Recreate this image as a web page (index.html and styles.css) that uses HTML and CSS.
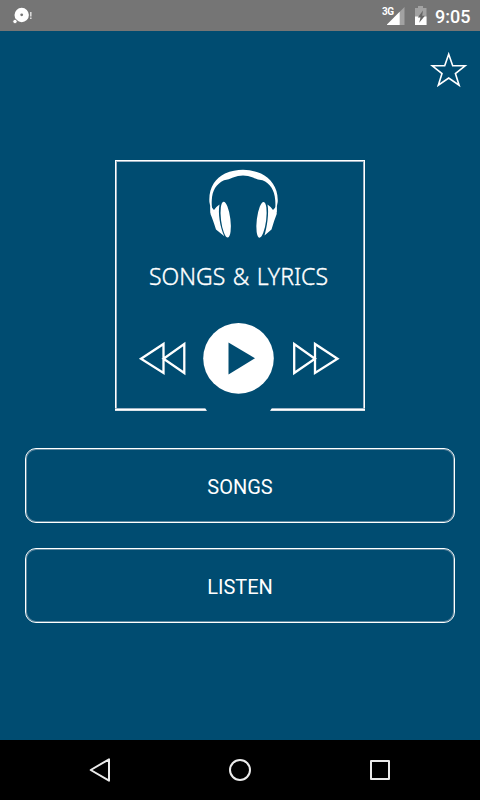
FILE: index.html
```html
<!DOCTYPE html>
<html lang="en">
<head>
<meta charset="utf-8">
<title>Songs &amp; Lyrics</title>
<link rel="stylesheet" href="styles.css">
</head>
<body>
<div class="screen">
  <header class="status">
    <svg class="notice" width="20" height="18" viewBox="12 7 20 18"><circle cx="21.700" cy="15" r="7.200" fill="#fff"/><circle cx="21.700" cy="14.800" r="1.400" fill="#757575"/><circle cx="15" cy="21.500" r="2.100" fill="#fff" stroke="#757575" stroke-width=".7"/><path d="M30.800 12v4.500M30.800 17.500v1.500" stroke="#ddd" stroke-width="1.500"/></svg>
    <span class="network">3G</span>
    <svg class="signal" width="18" height="19" viewBox="387 6 18 19"><path d="M404.500 7v18h-18z" fill="#a2a2a2"/><path d="M399.700 11.800v13.200H386.500z" fill="#fff"/></svg>
    <svg class="battery" width="13" height="19" viewBox="414 6 13 19"><path d="M418 6h5v2h3.500v17H415V8h3z" fill="#a2a2a2"/><path d="M415 16.500h11.500V25H415z" fill="#fff"/><path d="M423 10.500l-5.200 7h2.700l-1.300 5.300 5.700-7h-2.700z" fill="#666"/></svg>
    <span class="clock">9:05</span>
  </header>
  <main class="content">
    <div class="toolbar">
      <svg width="40" height="38" viewBox="429 50 40 38"><path d="M448.700 54.200l4 11.600h12.400l-9.700 7.700 3.700 11.700-10.400-7.200-10.400 7.200 3.700-11.700-9.700-7.700h12.400z" fill="none" stroke="#fff" stroke-width="1.600"/></svg>
    </div>
    <section class="card">
      <svg class="headphones" width="72" height="70" viewBox="207 169 72 70" fill="#fff">
        <path d="M209.400 202C208.500 188 215 178.500 225 173.500Q243 166 261 173.500C271 178.500 278.500 188 277.700 202L276.700 207V212L275 211.500C275.500 207 275.500 204 275.200 200C274.500 190 270 183.500 262.500 180.300Q257 179.500 253 177.500Q243 173.700 233 177.500Q229 179.500 224 180.300C216 184 212.200 191 211.800 200C211.500 204 211.700 207 213 211L210.500 213L210.400 207Z"/>
        <path d="M210.300 206L214 210Q217 206 219.500 204.500C217.800 213 220 227 224.300 236.300L216 229.500Q213 220 210.500 214Z"/>
        <ellipse cx="225.700" cy="219.600" rx="4.700" ry="18" transform="rotate(-7 225.700 219.600)"/>
        <path d="M276.700 206L273 210Q270 206 267.500 204.500C269.200 213 267 227 264.500 235.500L271.500 229.500Q274.300 220 276.700 214Z"/>
        <ellipse cx="261.500" cy="219.800" rx="4.700" ry="18" transform="rotate(7 261.500 219.800)"/>
      </svg>
      <h1 class="title">SONGS &amp; LYRICS</h1>
      <div class="controls">
        <svg width="48" height="36" viewBox="138 340 48 36" fill="none" stroke="#fff" stroke-width="2.300"><path d="M163.500 344v29L141 358.700zM184.300 344v29L163.500 358.700z"/></svg>
        <svg width="72" height="72" viewBox="202.500 322.500 72 72"><circle cx="238" cy="358.900" r="35.300" fill="#fff"/><path d="M228 343v32L254.500 358.800z" fill="#004c71"/></svg>
        <svg width="48" height="36" viewBox="292 340 48 36" fill="none" stroke="#fff" stroke-width="2.300"><path d="M294.200 344v29L315 358.700zM315 344v29L337.500 358.700z"/></svg>
      </div>
    </section>
    <button class="button">SONGS</button>
    <button class="button">LISTEN</button>
  </main>
  <nav class="nav">
    <svg width="24" height="26" viewBox="88 757 24 26"><path d="M109 759.300v21.400L90.700 770z"/></svg>
    <svg width="24" height="26" viewBox="228 757 24 26"><circle cx="240" cy="770" r="10"/></svg>
    <svg width="24" height="26" viewBox="368 757 24 26"><rect x="371" y="761" width="18" height="18"/></svg>
  </nav>
</div>
</body>
</html>
```
FILE: styles.css
```css
* { box-sizing: border-box; }
body { margin: 0; background: #004c71; font-family: Roboto, sans-serif; color: #fff; }
svg { display: block; flex: none; }
.screen { width: 480px; height: 800px; display: flex; flex-direction: column; overflow: hidden; }
.status { height: 31px; flex: none; background: #757575; display: flex; align-items: flex-start; padding: 6px 10px 0 12px; }
.notice { margin-top: 1px; }
.network { margin-left: auto; width: 12px; margin-right: -7px; font-size: 10px; line-height: 12px; font-weight: 700; letter-spacing: -0.4px; white-space: nowrap; }
.battery { margin-left: 9px; }
.clock { width: 35px; margin-left: 8px; font-size: 18px; line-height: 21px; font-weight: 500; white-space: nowrap; }
.content { flex: 1; display: flex; flex-direction: column; align-items: center; }
.toolbar { align-self: stretch; height: 129px; display: flex; justify-content: flex-end; padding: 19px 11px 0 0; }
.card { position: relative; width: 250px; height: 251px; margin-bottom: 37px; border: 1px solid #fff; border-bottom: 0; box-shadow: inset 1px 0 #a0b5c6, inset -1px 0 #a0b5c6, inset 0 1px #a0b5c6; display: flex; flex-direction: column; }
.card::before, .card::after { content: ""; position: absolute; bottom: 0; height: 3px; background: linear-gradient(#a0b5c6 1px, #fff 1px, #fff 2px, #dbe3e9 2px); }
.card::before { left: -1px; width: 92px; clip-path: polygon(0 0, 98% 0, 100% 100%, 0 100%); }
.card::after { right: -1px; width: 95px; clip-path: polygon(2% 0, 100% 0, 100% 100%, 0 100%); }
.headphones { margin: 8px 0 0 91px; }
.title { margin: 21px 0 0 33px; font: 300 23px/32px "Noto Sans", sans-serif; word-spacing: 1.500px; -webkit-text-stroke: 0.35px #fff; white-space: nowrap; }
.controls { display: flex; align-items: center; gap: 17px; margin: 30px 0 0 22px; }
.button { width: 430px; height: 75px; margin: 0 0 25px; padding: 2px 0 0; border: 1px solid #fff; box-shadow: inset 0 0 0 1px #6089a0; border-radius: 11px; background: none; color: #fff; font: 400 20px/24px Roboto, sans-serif; }
.nav { height: 60px; flex: none; background: #000; display: flex; align-items: center; justify-content: space-between; padding: 0 88px; }
.nav svg { fill: none; stroke: #ebebeb; stroke-width: 2; stroke-linejoin: round; }
```
